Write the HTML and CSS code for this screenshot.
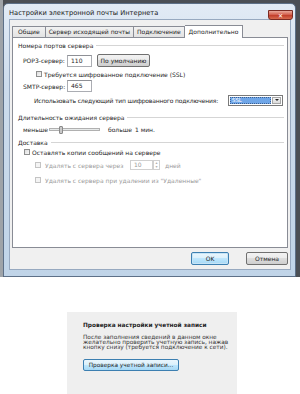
FILE: index.html
```html
<!DOCTYPE html>
<html lang="ru">
<head>
  <meta charset="utf-8">
  <title>Настройки электронной почты Интернета</title>
  <link rel="stylesheet" href="styles.css">
</head>
<body>
  <div class="screen">
    <div class="dialog">
      <div class="titlebar">
        <span class="title">Настройки электронной почты Интернета</span>
        <span class="close">✕</span>
      </div>
      <div class="client">
        <div class="tabs">
          <div class="tab">Общие</div>
          <div class="tab">Сервер исходящей почты</div>
          <div class="tab">Подключение</div>
          <div class="tab active">Дополнительно</div>
        </div>
        <div class="panel">
          <div class="group-title g1">Номера портов сервера</div>
          <div class="row pop3">
            <span class="label">POP3-сервер:</span>
            <span class="input">110</span>
            <span class="btn default-btn">По умолчанию</span>
          </div>
          <div class="row ssl">
            <span class="checkbox"></span>
            <span>Требуется шифрованное подключение (SSL)</span>
          </div>
          <div class="row smtp">
            <span class="label">SMTP-сервер:</span>
            <span class="input">465</span>
          </div>
          <div class="row enc">
            <span class="enc-label">Использовать следующий тип шифрованного подключения:</span>
            <span class="select"><span class="selected">SSL</span><span class="arrow"></span></span>
          </div>
          <div class="group-title g2">Длительность ожидания сервера</div>
          <div class="row slider-row">
            <span class="less">меньше</span>
            <span class="slider"><span class="thumb"></span></span>
            <span>больше</span>
            <span class="minutes">1 мин.</span>
          </div>
          <div class="group-title g3">Доставка</div>
          <div class="row keep">
            <span class="checkbox"></span>
            <span>Оставлять копии сообщений на сервере</span>
          </div>
          <div class="row sub sub1 disabled">
            <span class="checkbox"></span>
            <span class="sub-label">Удалять с сервера через</span>
            <span class="input small">10</span>
            <span class="spin"><span>▴</span><span>▾</span></span>
            <span class="days">дней</span>
          </div>
          <div class="row sub sub2 disabled">
            <span class="checkbox"></span>
            <span>Удалять с сервера при удалении из "Удаленные"</span>
          </div>
        </div>
        <div class="buttons">
          <span class="btn ok">OK</span>
          <span class="btn cancel">Отмена</span>
        </div>
      </div>
    </div>
  </div>

  <div class="verify">
    <div class="verify-title">Проверка настройки учетной записи</div>
    <p class="verify-text">После заполнения сведений в данном окне желательно проверить учетную запись, нажав кнопку снизу (требуется подключение к сети).</p>
    <span class="btn verify-btn">Проверка учетной записи...</span>
  </div>
</body>
</html>
```

FILE: styles.css
```css
body {
  margin: 0;
  background: #ffffff;
  font-family: "DejaVu Sans", sans-serif;
  font-size: 6px;
  color: #1e1e1e;
}

.screen {
  height: 277px;
  background: linear-gradient(90deg, #9ea3a8 0, #9ea3a8 3px, #4b4f55 3px);
  padding: 3px 0 0 3px;
  box-sizing: border-box;
}

.dialog {
  width: 293px;
  height: 274px;
  box-sizing: border-box;
  border: 1px solid #5d7088;
  border-radius: 5px 5px 0 0;
  background: linear-gradient(#e2ebf5, #cddcec 30%, #c0d4e8);
  padding: 0 4px 4px 5px;
}

.titlebar {
  height: 15px;
  display: flex;
  align-items: center;
}

.title {
  font-size: 6.7px;
  color: #1a1a1a;
  padding-top: 2px;
}

.close {
  margin-left: auto;
  margin-right: -2px;
  align-self: flex-end;
  width: 25px;
  height: 10px;
  box-sizing: border-box;
  border: 1px solid #7a2a22;
  border-radius: 0 0 3px 3px;
  background: linear-gradient(#e9a99b, #d4614f 45%, #c2402c 55%, #d66a4e);
  color: #ffffff;
  font-size: 6px;
  font-weight: bold;
  display: flex;
  align-items: center;
  justify-content: center;
  margin-bottom: -1px;
}

.client {
  height: 251px;
  box-sizing: border-box;
  border: 1px solid #97a9c0;
  background: #f0f0f0;
  padding: 6px 2px 0 2px;
}

.tabs {
  display: flex;
  height: 11px;
  align-items: flex-end;
}

.tab {
  height: 11px;
  box-sizing: border-box;
  border: 1px solid #898c95;
  border-bottom: none;
  border-left: none;
  background: linear-gradient(#f2f2f2, #e3e3e3);
  padding: 0 3px;
  line-height: 10px;
  white-space: nowrap;
}

.tab:first-child {
  border-left: 1px solid #898c95;
  padding: 0 5px;
}

.tab.active {
  height: 13px;
  margin-bottom: -1px;
  background: #ffffff;
  position: relative;
  z-index: 1;
  line-height: 11px;
  padding: 0 4px;
}

.panel {
  height: 211px;
  box-sizing: border-box;
  border: 1px solid #898c95;
  background: #ffffff;
  padding: 0 3px 0 5px;
}

.group-title {
  display: flex;
  align-items: center;
  gap: 3px;
  height: 7px;
  white-space: nowrap;
}

.group-title::after {
  content: "";
  flex: 1;
  height: 1px;
  background: #d5d5d5;
}

.g1 { margin-top: 4px; }
.g2 { margin-top: 7px; height: 8px; }
.g3 { margin-top: 5px; height: 8px; }

.row {
  display: flex;
  align-items: center;
  white-space: nowrap;
}

.label {
  width: 49px;
  padding-left: 5px;
  box-sizing: border-box;
}

.input {
  width: 25px;
  height: 12px;
  box-sizing: border-box;
  border: 1px solid #abadb3;
  border-top-color: #8e9096;
  background: #ffffff;
  padding-left: 3px;
  line-height: 10px;
}

.btn {
  height: 13px;
  box-sizing: border-box;
  border: 1px solid #707070;
  border-radius: 2px;
  background: linear-gradient(#f2f2f2, #ebebeb 50%, #dddddd 50%, #cfcfcf);
  display: flex;
  align-items: center;
  justify-content: center;
}

.pop3 { margin-top: 5px; height: 13px; }

.default-btn {
  width: 53px;
  margin-left: 5px;
}

.checkbox {
  width: 6px;
  height: 6px;
  box-sizing: border-box;
  border: 1px solid #8e8f8f;
  background: linear-gradient(135deg, #dcdcdc, #f8f8f8);
  margin-right: 2px;
  flex: none;
}

.ssl { margin-top: 3px; height: 8px; padding-left: 18px; }
.smtp { margin-top: 2px; height: 12px; }

.enc {
  margin-top: 2px;
  height: 12px;
  padding-left: 16px;
}

.enc-label {
  letter-spacing: -0.16px;
}

.select {
  flex: none;
  margin-left: auto;
  margin-right: 1px;
  width: 55px;
  height: 11px;
  box-sizing: border-box;
  border: 1px solid #7a7a7a;
  background: #ffffff;
  display: flex;
  padding: 1px;
}

.selected {
  flex: 1;
  background: #6fa6e8;
  color: #ffffff;
  padding-left: 1px;
  line-height: 5px;
  border: 1px dotted #3d5f8f;
  font-size: 5.4px;
}

.arrow {
  width: 9px;
  margin-left: 1px;
  border: 1px solid #a6a6a6;
  box-sizing: border-box;
  background: linear-gradient(#f4f4f4, #dcdcdc);
  display: flex;
  align-items: center;
  justify-content: center;
}

.arrow::after {
  content: "";
  border-left: 2px solid transparent;
  border-right: 2px solid transparent;
  border-top: 2px solid #222222;
}

.slider-row {
  margin-top: 4px;
  height: 8px;
  padding-left: 5px;
}

.less { width: 26px; }

.slider {
  width: 49px;
  height: 1px;
  margin-right: 8px;
  border: 1px solid #b0b0b0;
  background: #e7eaea;
  position: relative;
}

.thumb {
  position: absolute;
  left: 9px;
  top: -3px;
  width: 2px;
  height: 6px;
  background: #c9c9c9;
  border: 1px solid #8a8a8a;
  border-radius: 1px;
}

.minutes {
  margin-left: 3px;
}

.keep {
  margin-top: 2px;
  height: 8px;
  padding-left: 6px;
}

.sub { padding-left: 17px; }

.disabled {
  color: #9a9a9a;
}

.disabled .checkbox {
  border-color: #c4c4c4;
  background: #f4f4f4;
  margin-right: 4px;
}

.sub1 {
  margin-top: 4px;
  height: 10px;
}

.sub-label {
  width: 85px;
}

.input.small {
  width: 23px;
  height: 10px;
  line-height: 8px;
  border-color: #d0d0d0;
}

.spin {
  width: 7px;
  height: 10px;
  box-sizing: border-box;
  border: 1px solid #d0d0d0;
  display: flex;
  flex-direction: column;
  font-size: 4px;
  line-height: 4px;
  text-align: center;
  color: #b0b0b0;
}

.days { margin-left: 5px; }

.sub2 {
  margin-top: 6px;
  height: 8px;
}

.buttons {
  display: flex;
  justify-content: flex-end;
  gap: 17px;
  margin-top: 4px;
}

.ok {
  width: 38px;
  border-color: #3c7fb1;
  background: linear-gradient(#eaf6fd, #d9f0fc 50%, #bee6fd 50%, #a7d9f5);
  box-shadow: inset 0 0 0 1px #c7e4f6;
}

.cancel { width: 42px; }

.verify {
  margin: 35px 0 0 67px;
  width: 170px;
  height: 82px;
  box-sizing: border-box;
  background: #efefef;
  padding: 10px 0 0 16px;
  font-size: 5.8px;
}

.verify-title {
  font-weight: bold;
  line-height: 6px;
}

.verify-text {
  margin: 7px 0 0;
  line-height: 5.2px;
  color: #333333;
}

.verify-btn {
  margin-top: 8px;
  width: 96px;
  height: 12px;
  border-color: #3c7fb1;
  background: linear-gradient(#eaf6fd, #d9f0fc 50%, #bee6fd 50%, #a7d9f5);
}
```
